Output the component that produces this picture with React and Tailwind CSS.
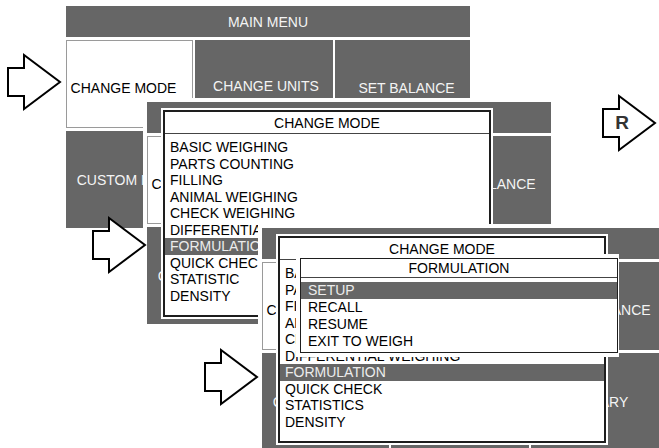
import React from "react";

const GRAY = "bg-[#666666]";

function Cell({ children, className = "" }) {
  return (
    <div className={`flex items-center justify-center whitespace-nowrap overflow-hidden ${className}`}>
      {children}
    </div>
  );
}

function Screen({ children }) {
  return (
    <div className="relative w-[404px] h-[222px] flex flex-col bg-white text-[14px] leading-none">
      <div className={`h-[31px] ${GRAY} text-[#f4f4f4] flex items-center justify-center`}>MAIN MENU</div>
      <div className="mt-[3px] h-[88px] flex gap-[2px]">
        <Cell className="w-[127px] bg-white border border-[#9a9a9a] text-black pt-2 pr-3">CHANGE MODE</Cell>
        <Cell className={`w-[138px] ${GRAY} text-[#f4f4f4] pt-1 pl-1`}>CHANGE UNITS</Cell>
        <Cell className={`flex-1 ${GRAY} text-[#f4f4f4] pt-2 pl-2`}>SET BALANCE</Cell>
      </div>
      <div className="mt-[3px] flex-1 flex gap-[2px]">
        <Cell className={`w-[127px] ${GRAY} text-[#f4f4f4]`}>CUSTOM MENU</Cell>
        <Cell className={`w-[138px] ${GRAY} text-[#f4f4f4]`}>SET PRINTER</Cell>
        <Cell className={`flex-1 ${GRAY} text-[#f4f4f4]`}>LIBRARY</Cell>
      </div>
      {children}
    </div>
  );
}

function ModeModal({ items, selected, children }) {
  return (
    <div className="absolute left-[14px] top-[6px] p-[2px] bg-white">
      <div className="relative w-[328px] h-[207px] border-2 border-[#1e1e1e] bg-white flex flex-col">
        <div className="h-[22px] border-b border-[#444] flex items-center justify-center text-black">CHANGE MODE</div>
        <div className="pt-[5px] flex flex-col">
          {items.map((it) => (
            <div
              key={it}
              className={`h-[16.5px] leading-[16.5px] pl-[5px] whitespace-nowrap ${
                it === selected ? `${GRAY} text-[#ececec]` : "text-black"
              }`}
            >
              {it}
            </div>
          ))}
        </div>
        {children}
      </div>
    </div>
  );
}

function FormulationPopup() {
  const items = ["SETUP", "RECALL", "RESUME", "EXIT TO WEIGH"];
  return (
    <div className="absolute left-[34px] top-[26px] pt-[4px] pb-[4px] pl-[4px] pr-[1px] bg-white">
      <div className="w-[318px] h-[95px] border border-[#1e1e1e] bg-white flex flex-col">
        <div className="h-[19px] border-b border-[#444] flex items-center justify-center text-black">FORMULATION</div>
        <div className="pt-[4px] flex flex-col">
          {items.map((it, i) => (
            <div
              key={it}
              className={`h-[17px] leading-[17px] pl-[7px] whitespace-nowrap ${
                i === 0 ? `${GRAY} text-[#ececec]` : "text-black"
              }`}
            >
              {it}
            </div>
          ))}
        </div>
      </div>
    </div>
  );
}

function Arrow({ className = "", label }) {
  return (
    <div className={`absolute ${className}`}>
      <svg width="58" height="60" viewBox="-2 -2 58 60">
        <polygon
          points="0,13 16,13 16,0 52,27 16,54 16,41 0,41"
          fill="white"
          stroke="black"
          strokeWidth="2"
          strokeLinejoin="miter"
        />
      </svg>
      {label && (
        <div className="absolute left-[11px] top-[18px] w-[20px] text-center text-[19px] leading-[22px] font-bold text-[#333]">
          {label}
        </div>
      )}
    </div>
  );
}

const LIST2 = [
  "BASIC WEIGHING",
  "PARTS COUNTING",
  "FILLING",
  "ANIMAL WEIGHING",
  "CHECK WEIGHING",
  "DIFFERENTIAL WEIGHING",
  "FORMULATION",
  "QUICK CHECK",
  "STATISTIC",
  "DENSITY",
];

const LIST3 = [
  "BASIC WEIGHING",
  "PARTS COUNTING",
  "FILLING",
  "ANIMAL WEIGHING",
  "CHECK WEIGHING",
  "DIFFERENTIAL WEIGHING",
  "FORMULATION",
  "QUICK CHECK",
  "STATISTICS",
  "DENSITY",
];

export default function App() {
  return (
    <div
      className="relative w-[659px] h-[448px] bg-white overflow-hidden"
      style={{ fontFamily: '"Liberation Sans", Arial, sans-serif' }}
    >
      <div className="absolute left-[66px] top-[6px]">
        <Screen />
      </div>

      <div className="absolute left-[143px] top-[98px] p-[4px] bg-white">
        <Screen>
          <ModeModal items={LIST2} selected="FORMULATION" />
        </Screen>
      </div>

      <div className="absolute left-[258px] top-[224px] p-[4px] bg-white">
        <Screen>
          <ModeModal items={LIST3} selected="FORMULATION" />
          <FormulationPopup />
        </Screen>
      </div>

      <Arrow className="left-[6px] top-[53px]" />
      <Arrow className="left-[91px] top-[216px]" />
      <Arrow className="left-[203px] top-[348px]" />
      <Arrow className="left-[601px] top-[94px]" label="R" />
    </div>
  );
}
